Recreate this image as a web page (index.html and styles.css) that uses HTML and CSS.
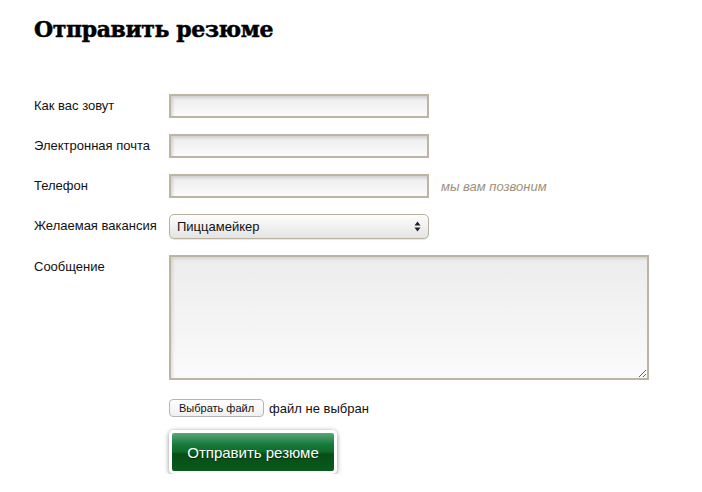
FILE: index.html
```html
<!DOCTYPE html>
<html lang="ru">
<head>
<meta charset="utf-8">
<title>Отправить резюме</title>
<link rel="stylesheet" href="styles.css">
</head>
<body>
<div class="page">
  <h1 class="title">Отправить резюме</h1>
  <form class="form">
    <label class="label">Как вас зовут</label>
    <div class="field"><input class="input" type="text"></div>

    <label class="label">Электронная почта</label>
    <div class="field"><input class="input" type="text"></div>

    <label class="label">Телефон</label>
    <div class="field"><input class="input" type="text"><span class="hint">мы вам позвоним</span></div>

    <label class="label">Желаемая вакансия</label>
    <div class="field">
      <div class="select">
        <span class="select-text">Пиццамейкер</span>
        <svg class="select-arrows" width="7" height="11" viewBox="0 0 7 11"><path d="M3.5 0.5L6.5 4.5H0.5Z" fill="#222"/><path d="M3.5 10.5L6.5 6.5H0.5Z" fill="#222"/></svg>
      </div>
    </div>

    <label class="label">Сообщение</label>
    <div class="field"><textarea class="textarea"></textarea></div>

    <div class="spacer"></div>
    <div class="field file-row"><span class="file-btn">Выбрать файл</span><span class="file-text">файл не выбран</span></div>

    <div class="spacer"></div>
    <div class="field"><span class="submit">Отправить резюме</span></div>
  </form>
</div>
</body>
</html>
```
FILE: styles.css
```css
html, body {
  margin: 0;
  padding: 0;
  background: #fff;
}
body {
  font-family: "Liberation Sans", Arial, sans-serif;
  color: #111;
}
.page {
  padding: 14px 34px 0 34px;
}
.title {
  margin: 0;
  font-family: "DejaVu Serif", serif;
  font-weight: bold;
  font-size: 22px;
  letter-spacing: -0.4px;
  line-height: 30px;
  color: #000;
  -webkit-text-stroke: 0.5px #000;
}
.form {
  display: grid;
  grid-template-columns: 135px 1fr;
  row-gap: 16px;
  margin-top: 50px;
}
.label {
  font-size: 13px;
  line-height: 24px;
  color: #111;
}
.field {
  display: flex;
  align-items: center;
  gap: 12px;
}
.input {
  box-sizing: border-box;
  width: 260px;
  height: 24px;
  margin: 0;
  border: 2px solid #bdb5a3;
  background: linear-gradient(#ececec, #fbfbfb);
  box-shadow: inset 2px 2px 3px rgba(0,0,0,0.12);
  outline: none;
}
.hint {
  font-size: 13px;
  font-style: italic;
  color: #9b907b;
}
.select {
  box-sizing: border-box;
  width: 260px;
  height: 25px;
  border: 1px solid #b9b19e;
  border-radius: 5px;
  background: linear-gradient(#fdfdfd, #e4e4e4);
  box-shadow: 0 1px 1px rgba(0,0,0,0.1);
  display: flex;
  align-items: center;
  justify-content: space-between;
  padding: 0 7px 0 7px;
}
.select-text {
  font-size: 13px;
  color: #111;
}
.select-arrows {
  display: block;
}
.textarea {
  box-sizing: border-box;
  width: 480px;
  height: 125px;
  margin: 0;
  border: 2px solid #bdb5a3;
  background: linear-gradient(#ececec, #fbfbfb);
  box-shadow: inset 2px 2px 3px rgba(0,0,0,0.1);
  resize: both;
  outline: none;
}
.spacer {
  height: 1px;
}
.file-row {
  gap: 5px;
  margin-top: 3px;
}
.file-btn {
  box-sizing: border-box;
  height: 18px;
  padding: 0 9px;
  border: 1px solid #b5b5b5;
  border-radius: 4px;
  background: linear-gradient(#ffffff, #efefef);
  font-size: 11px;
  line-height: 16px;
  color: #111;
}
.file-text {
  font-size: 13px;
  color: #111;
}
.submit {
  box-sizing: border-box;
  display: flex;
  align-items: center;
  justify-content: center;
  width: 168px;
  height: 44px;
  margin-top: -3px;
  border: 3px solid #fff;
  border-radius: 5px;
  background: linear-gradient(#5aa87a 0%, #177a3a 30%, #0e6a2a 50%, #064e15 55%, #0a5a1d 100%);
  box-shadow: 0 1px 5px rgba(0,0,0,0.45);
  color: #fff;
  font-size: 15px;
  text-shadow: 0 1px 1px rgba(0,0,0,0.5);
}
```
